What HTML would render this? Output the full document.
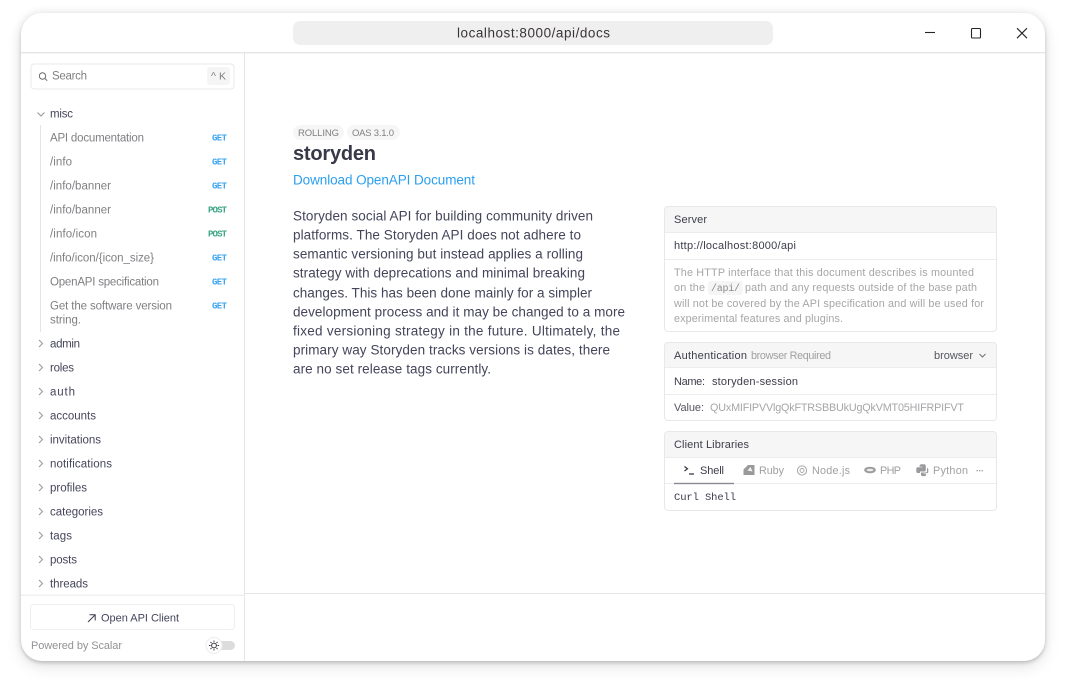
<!DOCTYPE html>
<html lang="en"><head><meta charset="utf-8"><title>storyden API docs</title>
<style>
html,body{margin:0;padding:0;background:#fff;width:1066px;height:690px;overflow:hidden}
#win{position:absolute;left:21px;top:13px;width:1024px;height:648px;border-radius:21px;background:#fff;box-shadow:0 2px 3px rgba(0,0,0,.15),0 6px 16px rgba(0,0,0,.10),0 0 9px rgba(0,0,0,.09)}
svg{position:absolute;left:0;top:0}
text{font-family:"Liberation Sans",sans-serif;font-size:11.5px;white-space:pre}
.s{fill:#808084}
.g{fill:#44455a}
.m{font-family:"Liberation Mono",monospace;font-weight:700;font-size:9px}
.get{fill:#3aa5ef}.post{fill:#3aa584}
.d{font-size:13.5px;fill:#44455a}
.h{font-size:11px;fill:#3c3d4a}
.f{font-size:10.8px;fill:#a6a6a9}
.t{font-size:10.8px;fill:#a0a0a3}
.c{fill:none;stroke:#97979a;stroke-width:1}
</style></head><body>
<div id="win"></div>
<svg width="1066" height="690" viewBox="0 0 1066 690" xmlns="http://www.w3.org/2000/svg">
<!-- frame lines -->
<g fill="#e6e6e6">
<rect x="21" y="52" width="1024" height="1.4"/>
<rect x="244" y="53" width="1" height="608"/>
<rect x="245" y="593" width="800" height="1"/>
<rect x="21" y="594.500" width="223" height="1.500" fill="#f0f0f0"/>
</g>
<!-- url bar -->
<rect x="293" y="21" width="480" height="24" rx="7" fill="#efefef"/>
<text x="457" y="37.500" textLength="153" style="font-size:13.5px;fill:#3a3436">localhost:8000/api/docs</text>
<!-- window controls -->
<g fill="none" stroke="#26262a" stroke-width="1.100">
<path d="M925 32.500H935"/>
<rect x="971.500" y="28.500" width="9" height="9.500" rx="1"/>
<path d="M1017 28.200L1027 38.200M1027 28.200L1017 38.200"/>
</g>
<!-- search -->
<rect x="31" y="64" width="203" height="25" rx="3" fill="#fff" stroke="#e8e8e8" stroke-width="1"/>
<circle cx="42.500" cy="76" r="3.200" fill="none" stroke="#6d6d70" stroke-width="1"/>
<path d="M45 78.500L47.200 80.700" stroke="#6d6d70" stroke-width="1"/>
<text x="52" y="79.700" textLength="35" class="s" style="font-size:11.500px">Search</text>
<rect x="207" y="67" width="23" height="18" rx="3" fill="#f5f5f5"/>
<text x="211" y="79.700" textLength="15" class="s" style="font-size:10.500px">^ K</text>
<!-- tree -->
<path d="M37.500 112.500L41 116L44.500 112.500" class="c"/>
<text x="50" y="117.700" textLength="23" class="g">misc</text>
<rect x="40" y="125" width="1" height="207" fill="#e4e4e4"/>
<text x="50" y="141.700" textLength="94" class="s">API documentation</text>
<text x="50" y="165.700" textLength="22" class="s">/info</text>
<text x="50" y="189.700" textLength="61" class="s">/info/banner</text>
<text x="50" y="213.700" textLength="61" class="s">/info/banner</text>
<text x="50" y="237.700" textLength="47" class="s">/info/icon</text>
<text x="50" y="261.700" textLength="104" class="s">/info/icon/{icon_size}</text>
<text x="50" y="285.700" textLength="109" class="s">OpenAPI specification</text>
<text x="50" y="309.700" textLength="122" class="s">Get the software version</text>
<text x="50" y="323.700" textLength="31" class="s">string.</text>
<g>
<text x="212" y="140.300" textLength="15" class="m get">GET</text>
<text x="212" y="164.300" textLength="15" class="m get">GET</text>
<text x="212" y="188.300" textLength="15" class="m get">GET</text>
<text x="208" y="212.300" textLength="19" class="m post">POST</text>
<text x="208" y="236.300" textLength="19" class="m post">POST</text>
<text x="212" y="260.300" textLength="15" class="m get">GET</text>
<text x="212" y="284.300" textLength="15" class="m get">GET</text>
<text x="212" y="308.300" textLength="15" class="m get">GET</text>
</g>
<g class="c">
<path d="M39 340L42.500 343.500L39 347"/>
<path d="M39 364L42.500 367.500L39 371"/>
<path d="M39 388L42.500 391.500L39 395"/>
<path d="M39 412L42.500 415.500L39 419"/>
<path d="M39 436L42.500 439.500L39 443"/>
<path d="M39 460L42.500 463.500L39 467"/>
<path d="M39 484L42.500 487.500L39 491"/>
<path d="M39 508L42.500 511.500L39 515"/>
<path d="M39 532L42.500 535.500L39 539"/>
<path d="M39 556L42.500 559.500L39 563"/>
<path d="M39 580L42.500 583.500L39 587"/>
</g>
<text x="50" y="347.700" textLength="30" class="g">admin</text>
<text x="50" y="371.700" textLength="24" class="g">roles</text>
<text x="50" y="395.700" textLength="25" class="g">auth</text>
<text x="50" y="419.700" textLength="46" class="g">accounts</text>
<text x="50" y="443.700" textLength="51" class="g">invitations</text>
<text x="50" y="467.700" textLength="62" class="g">notifications</text>
<text x="50" y="491.700" textLength="37" class="g">profiles</text>
<text x="50" y="515.700" textLength="53" class="g">categories</text>
<text x="50" y="539.700" textLength="22" class="g">tags</text>
<text x="50" y="563.700" textLength="27" class="g">posts</text>
<text x="50" y="587.700" textLength="38" class="g">threads</text>
<!-- sidebar footer -->
<rect x="30.500" y="604.500" width="204" height="25" rx="3" fill="#fff" stroke="#efefef"/>
<path d="M88 622L95 615M89.500 614.800H95.200V620.500" fill="none" stroke="#3c3d4d" stroke-width="1"/>
<text x="101" y="621.700" textLength="78" class="g" style="font-size:11px">Open API Client</text>
<text x="31" y="649" textLength="91" class="s" style="font-size:11px;fill:#929295">Powered by Scalar</text>
<rect x="214" y="641" width="21" height="9" rx="4.500" fill="#dcdcdc"/>
<circle cx="214" cy="645.500" r="8" fill="#fff" stroke="#ececec"/>
<circle cx="214" cy="645.500" r="2.400" fill="none" stroke="#33343f" stroke-width="1"/>
<path d="M214 640.500V642M214 649V650.500M209 645.500H210.500M217.500 645.500H219M210.500 642L211.500 643M216.500 648L217.500 649M217.500 642L216.500 643M211.500 648L210.500 649" stroke="#33343f" stroke-width=".9"/>
<!-- main intro -->
<rect x="293" y="125" width="51" height="15" rx="7.500" fill="#f6f6f6"/>
<rect x="347" y="125" width="53" height="15" rx="7.500" fill="#f6f6f6"/>
<text x="298" y="136" textLength="41" style="font-size:9.500px;fill:#808083">ROLLING</text>
<text x="352" y="136" textLength="42" style="font-size:9.500px;fill:#808083">OAS 3.1.0</text>
<text x="293" y="160" textLength="83" style="font-size:20px;font-weight:700;fill:#383948">storyden</text>
<text x="293" y="184.700" textLength="182" style="font-size:13.500px;fill:#2a9ff0">Download OpenAPI Document</text>
<text x="293" y="220.500" textLength="300" class="d">Storyden social API for building community driven</text>
<text x="293" y="239.500" textLength="288" class="d">platforms. The Storyden API does not adhere to</text>
<text x="293" y="258.500" textLength="290" class="d">semantic versioning but instead applies a rolling</text>
<text x="293" y="277.500" textLength="292" class="d">strategy with deprecations and minimal breaking</text>
<text x="293" y="297.500" textLength="299" class="d">changes. This has been done mainly for a simpler</text>
<text x="293" y="316.500" textLength="332" class="d">development process and it may be changed to a more</text>
<text x="293" y="335.500" textLength="327" class="d">fixed versioning strategy in the future. Ultimately, the</text>
<text x="293" y="354.500" textLength="317" class="d">primary way Storyden tracks versions is dates, there</text>
<text x="293" y="373.500" textLength="198" class="d">are no set release tags currently.</text>
<!-- server card -->
<path d="M664.500 232.500V210a3 3 0 0 1 3-3H993.500a3 3 0 0 1 3 3V232.500Z" fill="#f6f6f6"/>
<rect x="664.500" y="206.500" width="332" height="125" rx="3.500" fill="none" stroke="#e8e8e8"/>
<path d="M665 232.500H996M665 259.500H996" stroke="#ececec"/>
<text x="674" y="223" textLength="33" class="h">Server</text>
<text x="674" y="249" textLength="122" class="h">http://localhost:8000/api</text>
<text x="674" y="276" textLength="300" class="f">The HTTP interface that this document describes is mounted</text>
<text x="674" y="291" textLength="31" class="f">on the</text>
<rect x="708" y="281" width="34.500" height="14" rx="2.500" fill="#f5f5f5"/>
<text x="711" y="291" textLength="29" style="font-family:'Liberation Mono',monospace;font-size:10px;fill:#8b8b8e">/api/</text>
<text x="745" y="291" textLength="232" class="f">path and any requests outside of the base path</text>
<text x="674" y="307" textLength="310" class="f">will not be covered by the API specification and will be used for</text>
<text x="674" y="322" textLength="169" class="f">experimental features and plugins.</text>
<!-- auth card -->
<path d="M664.500 367.500V346a3 3 0 0 1 3-3H993.500a3 3 0 0 1 3 3V367.500Z" fill="#f6f6f6"/>
<rect x="664.500" y="342.500" width="332" height="78" rx="3.500" fill="none" stroke="#e8e8e8"/>
<path d="M665 367.500H996M665 394.500H996" stroke="#ececec"/>
<text x="674" y="359" textLength="73" class="h" style="-webkit-text-stroke:.2px #33343f">Authentication</text>
<text x="751" y="359" textLength="80" class="t">browser Required</text>
<text x="934" y="359" textLength="39" class="h" style="fill:#55565f">browser</text>
<path d="M979.500 354L982.500 357L985.500 354" fill="none" stroke="#70717a"/>
<text x="674" y="385" textLength="31" class="h">Name:</text>
<text x="712" y="385" textLength="86" class="h">storyden-session</text>
<text x="674" y="411" textLength="30" class="h" style="fill:#55565f">Value:</text>
<text x="710" y="411" textLength="254" class="f">QUxMIFIPVVlgQkFTRSBBUkUgQkVMT05HIFRPIFVT</text>
<!-- client libs card -->
<path d="M664.500 457.500V435a3 3 0 0 1 3-3H993.500a3 3 0 0 1 3 3V457.500Z" fill="#f6f6f6"/>
<rect x="664.500" y="431.500" width="332" height="79" rx="3.500" fill="none" stroke="#e8e8e8"/>
<path d="M665 457.500H996M665 483.500H996" stroke="#ececec"/>
<rect x="674" y="482.800" width="60" height="1.400" fill="#8a8a94"/>
<text x="674" y="448" textLength="75" class="h">Client Libraries</text>
<path d="M684.500 466.500L687.500 468.800L684.500 471M689 474H694" fill="none" stroke="#33343f" stroke-width="1.200"/>
<text x="700" y="474" textLength="24" class="h">Shell</text>
<!-- ruby -->
<path d="M743.500 475V469.500L748 465H754.500V475Z" fill="#9a9a9c"/>
<path d="M747.500 470.500L750.500 467L752.500 471.500Z" fill="#f4f4f4"/>
<text x="759" y="474" textLength="25" class="t">Ruby</text>
<!-- node -->
<circle cx="802" cy="470.500" r="4.600" fill="none" stroke="#a6a6a9"/>
<circle cx="802" cy="470.500" r="2" fill="none" stroke="#a6a6a9" stroke-width=".9"/>
<text x="812" y="474" textLength="38" class="t">Node.js</text>
<!-- php -->
<ellipse cx="870" cy="470" rx="5.800" ry="3.300" fill="#9d9d9f"/>
<ellipse cx="870" cy="470" rx="3.400" ry="1.300" fill="#eee"/>
<text x="880" y="474" textLength="21" class="t">PHP</text>
<!-- python -->
<path d="M919.500 466a2 2 0 0 1 2-1.800h2.500a2 2 0 0 1 1.800 1.800V470a1.500 1.500 0 0 1-1.500 1.500H920v1.500H917.800a1.500 1.500 0 0 1-1.500-1.500V468.800a1.500 1.500 0 0 1 1.500-1.500H922.500V466.800H919.500Z" fill="#9a9a9c"/>
<path d="M921 472.500h4.500a1.500 1.500 0 0 0 1.500-1.500v-3h.3a1.200 1.200 0 0 1 1 1.200v2.800a1.200 1.200 0 0 1-1.200 1.200H923.500v.5h2.500v1a1.600 1.600 0 0 1-1.700 1.400h-1.800a1.600 1.600 0 0 1-1.500-1.500Z" fill="#9a9a9c"/>
<text x="933" y="474" textLength="35" class="t">Python</text>
<g fill="#9a9a9d"><rect x="976.500" y="470" width="1.300" height="1.300"/><rect x="979" y="470" width="1.300" height="1.300"/><rect x="981.500" y="470" width="1.300" height="1.300"/></g>
<text x="674" y="500" textLength="62" style="font-family:'Liberation Mono',monospace;font-size:10.500px;fill:#3c3d4d">Curl Shell</text>
</svg>
</body></html>
